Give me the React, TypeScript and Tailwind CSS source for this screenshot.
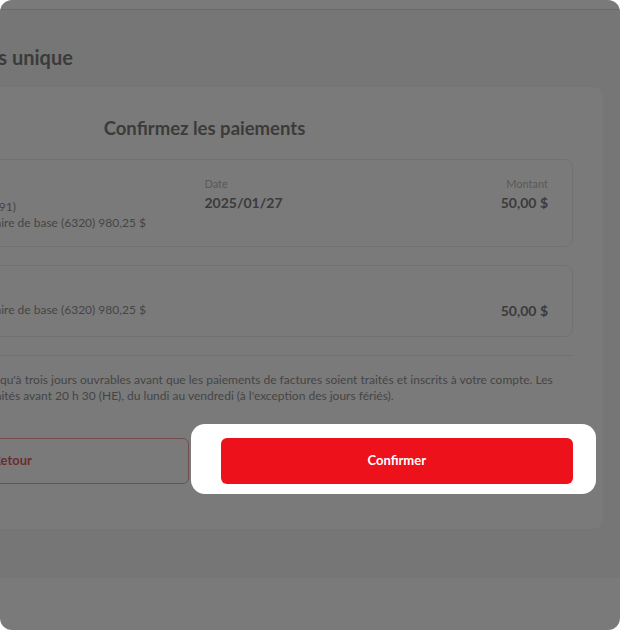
export default function App() {
  return (
    <div className="min-h-screen bg-white">
      <div className="relative flex h-[630px] w-[620px] flex-col overflow-hidden rounded-xl bg-[#f5f5f5] font-['Lato',sans-serif]">
        {/* top bar */}
        <div className="h-[10px] shrink-0 border-b border-[#d4d4d4] bg-white" />

        <main className="-ml-[194px] w-[797px] shrink-0 pt-[33px] pb-[49px]">
          <h1 className="ml-[13px] text-[20px] font-bold leading-7 text-[#5a5a5a]">Paiement de factures unique</h1>

          <section className="mt-4 rounded-[10px] bg-white px-[30px] pt-[29px] pb-[45px]">
            <h2 className="text-center text-[18.5px] font-bold leading-6 text-[#5a5a5a]">Confirmez les paiements</h2>

            <div className="mt-[19px] grid h-[88px] grid-cols-2 rounded-lg border border-[#e8e8e8] px-6 pt-4">
              <div>
                <p className="text-[14px] font-bold leading-5 text-[#5a5a5a]">Hydro-Québec</p>
                <p className="mt-[3px] text-[12px] leading-4 text-[#747474]">Numéro de compte (…40091)</p>
                <p className="text-[12px] leading-4 text-[#747474]">Prélevé de : Compte bancaire de base (6320) 980,25 $</p>
              </div>
              <div className="flex justify-between">
                <div>
                  <p className="text-[11px] leading-4 text-[#a9a9a9]">Date</p>
                  <p className="mt-px text-[14px] font-bold leading-5 text-[#5a5a5a]">2025/01/27</p>
                </div>
                <div className="text-right">
                  <p className="text-[11px] leading-4 text-[#a9a9a9]">Montant</p>
                  <p className="mt-px text-[14px] font-bold leading-5 text-[#5a5a5a]">50,00 $</p>
                </div>
              </div>
            </div>

            <div className="mt-[18px] grid h-[72px] grid-cols-2 rounded-lg border border-[#e8e8e8] px-6 pt-4">
              <div>
                <p className="text-[14px] font-bold leading-5 text-[#5a5a5a]">Bell Canada</p>
                <p className="text-[12px] leading-4 text-[#747474]">Prélevé de : Compte bancaire de base (6320) 980,25 $</p>
              </div>
              <div className="flex justify-end">
                <p className="mt-[19px] text-[14px] font-bold leading-5 text-[#5a5a5a]">50,00 $</p>
              </div>
            </div>

            <div className="mt-[18px] border-t border-dotted border-[#d0d0d0]" />

            <p className="mt-4 text-[12px] leading-4 text-[#747474]">
              Il faut prévoir un délai allant jusqu'à trois jours ouvrables avant que les paiements de factures soient traités et inscrits à votre compte. Les
              <br />
              paiements reçus seront tous traités avant 20 h 30 (HE), du lundi au vendredi (à l'exception des jours fériés).
            </p>

            <div className="mt-[34px] grid h-[46px] grid-cols-2 gap-8">
              <button className="rounded-md border border-[#e98a8e] bg-white text-[13px] font-bold text-[#d8353b]">Retour</button>
              <div className="relative z-20">
                <span className="absolute -top-[14px] -right-[23px] -bottom-[10px] -left-[30px] rounded-[14px] bg-white" />
                <button className="relative h-full w-full rounded-md bg-[#ec111a] text-[13px] font-bold text-white">Confirmer</button>
              </div>
            </div>
          </section>
        </main>

        <footer className="flex-1 bg-white" />

        {/* dimmed overlay, the confirm button sits above it */}
        <div className="pointer-events-none absolute inset-0 z-10 bg-[rgba(40,40,40,0.62)]" />
      </div>
    </div>
  );
}
